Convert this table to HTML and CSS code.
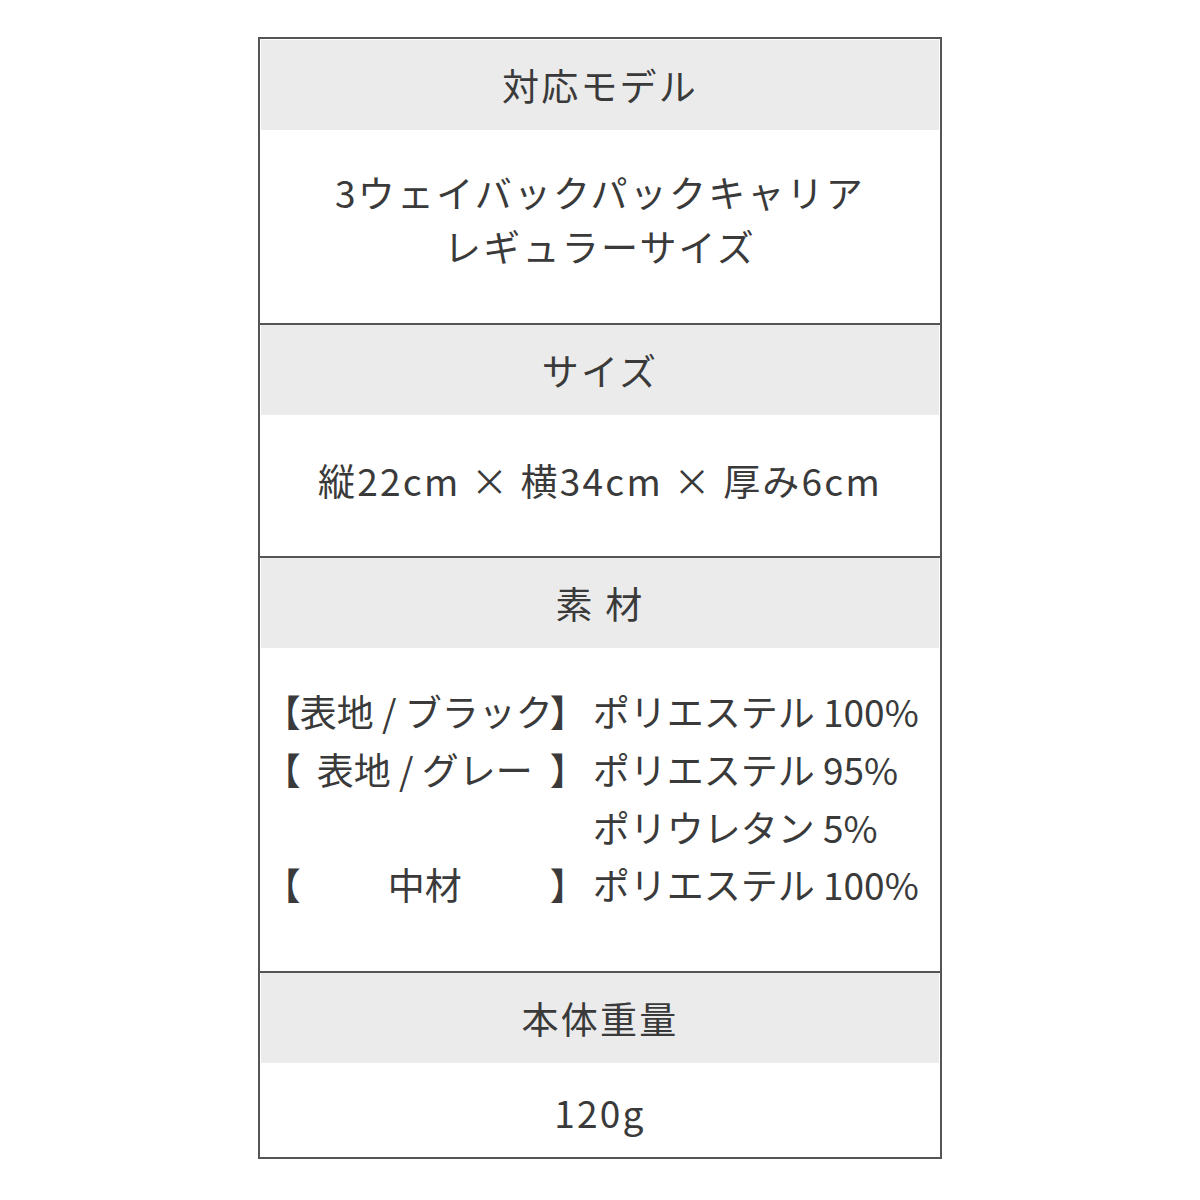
FILE: index.html
```html
<!DOCTYPE html>
<html lang="ja">
<head>
<meta charset="utf-8">
<link rel="stylesheet" href="styles.css">
</head>
<body>
<div class="spec">
  <div class="head first">対応モデル</div>
  <div class="val val-model">
    <div>3ウェイバックパックキャリア</div>
    <div>レギュラーサイズ</div>
  </div>
  <div class="head">サイズ</div>
  <div class="val val-size">縦22cm × 横34cm × 厚み6cm</div>
  <div class="head">素 材</div>
  <div class="val val-mat">
    <div class="mat">
      <span class="bl">【</span><span class="lbl">表地 / ブラック</span><span class="br">】</span><span class="txt">ポリエステル 100%</span>
      <span class="bl">【</span><span class="lbl">表地 / グレー</span><span class="br">】</span><span class="txt">ポリエステル 95%</span>
      <span class="bl"></span><span class="lbl"></span><span class="br"></span><span class="txt">ポリウレタン 5%</span>
      <span class="bl">【</span><span class="lbl">中材</span><span class="br">】</span><span class="txt">ポリエステル 100%</span>
    </div>
  </div>
  <div class="head">本体重量</div>
  <div class="val val-weight">120g</div>
</div>
</body>
</html>
```

FILE: styles.css
```css
html, body {
  margin: 0;
  padding: 0;
  background: #ffffff;
}
body {
  padding-top: 37px;
  font-family: "Noto Sans CJK JP", "Noto Sans", sans-serif;
  color: #3a3a3a;
  font-size: 37px;
  letter-spacing: 0.06em;
}
.spec {
  width: 678px;
  margin: 0 auto;
  border: 2px solid #555555;
  padding: 1px;
  display: flex;
  flex-direction: column;
}
.head {
  background: #ebebeb;
  height: 90px;
  display: flex;
  align-items: center;
  justify-content: center;
  border-top: 2px solid #555555;
  box-sizing: content-box;
  margin: 0 -1px;
  padding: 0 1px;
  background-clip: content-box;
}
.head.first {
  border-top: 0;
}
.val {
  display: flex;
  flex-direction: column;
  align-items: center;
  justify-content: center;
  text-align: center;
  box-sizing: border-box;
}
.val-model {
  height: 193px;
  line-height: 54px;
  padding-bottom: 16px;
}
.val-size {
  height: 141px;
  padding-bottom: 12px;
}
.val-mat {
  height: 323px;
  padding-bottom: 22px;
}
.val-weight {
  height: 93px;
  padding-top: 4px;
}
.mat {
  display: grid;
  grid-template-columns: auto 250px auto auto;
  line-height: 57.7px;
  text-align: left;
  letter-spacing: 0;
  white-space: nowrap;
}
.bl {
  font-feature-settings: "palt" 1;
}
.lbl {
  text-align: center;
}
.txt {
  padding-left: 6px;
}
```
